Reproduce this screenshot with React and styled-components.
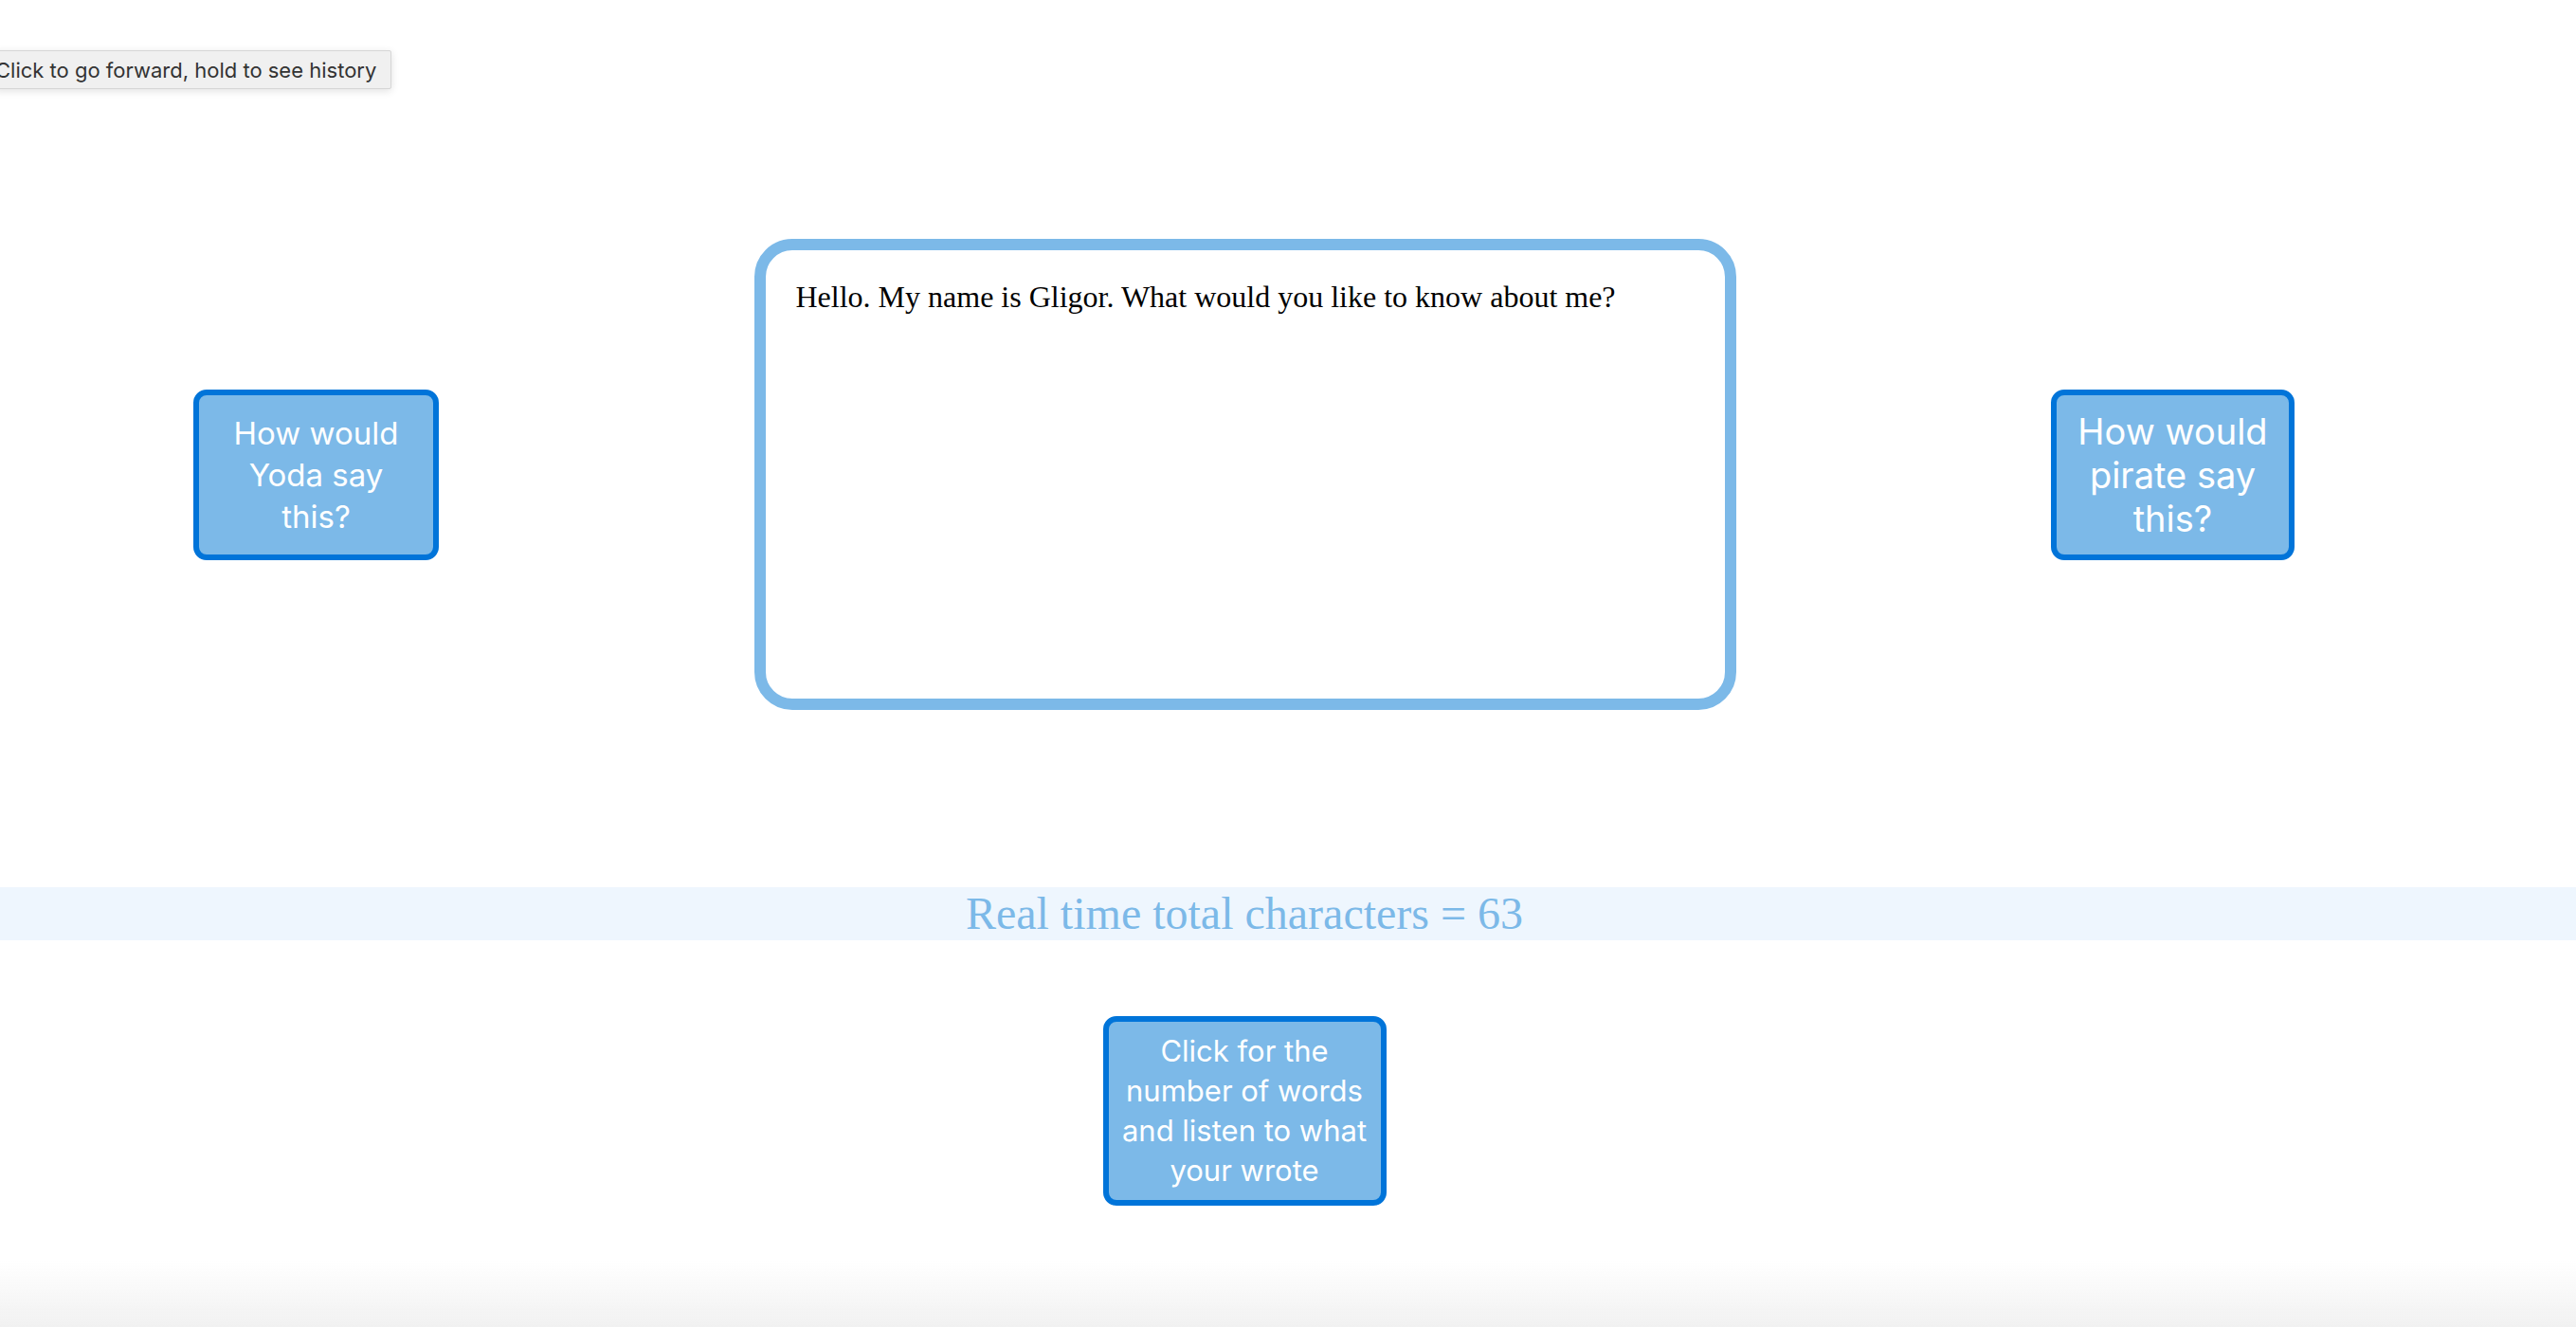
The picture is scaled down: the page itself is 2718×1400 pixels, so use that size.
import React from 'react';
import styled, { createGlobalStyle } from 'styled-components';

const message = 'Hello. My name is Gligor. What would you like to know about me?';

const App = () => {
  return (
    <>
      <GlobalStyle />
      <Page>
        <Tooltip>Click to go forward, hold to see history</Tooltip>

        <Row>
          <ActionButton $w={259} $h={180} $size={33} $lh={44}>
            How would
            <br />
            Yoda say
            <br />
            this?
          </ActionButton>

          <MessageBox defaultValue={message} spellCheck={false} />

          <ActionButton $w={257} $h={180} $size={38} $lh={46}>
            How would
            <br />
            pirate say
            <br />
            this?
          </ActionButton>
        </Row>

        <Counter>Real time total characters = {message.length}</Counter>

        <Bottom>
          <ActionButton $w={299} $h={200} $size={31} $lh={42}>
            Click for the
            <br />
            number of words
            <br />
            and listen to what
            <br />
            your wrote
          </ActionButton>
        </Bottom>
      </Page>
      <BottomFade />
    </>
  );
};

const GlobalStyle = createGlobalStyle`
  html, body {
    margin: 0;
    padding: 0;
    background: #ffffff;
  }
  body {
    font-family: "Liberation Serif", serif;
    overflow: hidden;
  }
`;

const Page = styled.main`
  position: relative;
  min-height: 1400px;
  padding: 252px 92px 0 0;
  box-sizing: border-box;
`;

const Tooltip = styled.div`
  position: absolute;
  top: 53px;
  left: -6px;
  height: 39px;
  padding: 0 15px 0 0;
  display: flex;
  align-items: center;
  background: #f0f0f0;
  border: 1px solid #d6d6d6;
  border-radius: 2px;
  box-shadow: 0 2px 8px rgba(0, 0, 0, 0.12);
  color: #333333;
  font-family: Inter, "Noto Sans", sans-serif;
  font-size: 22px;
  white-space: nowrap;
`;

const Row = styled.section`
  display: flex;
  align-items: center;
  justify-content: space-between;
  padding: 0 205px 0 204px;
`;

const MessageBox = styled.textarea`
  width: 1036px;
  height: 497px;
  box-sizing: border-box;
  padding: 31px 32px 32px;
  border: 12px solid #7cb9e8;
  border-radius: 40px;
  outline: none;
  resize: none;
  background: #ffffff;
  color: #000000;
  font-family: "Liberation Serif", serif;
  font-size: 32px;
  line-height: 1.15;
`;

const ActionButton = styled.button`
  width: ${({ $w }) => $w}px;
  height: ${({ $h }) => $h}px;
  box-sizing: border-box;
  flex-shrink: 0;
  padding: 0;
  display: flex;
  align-items: center;
  justify-content: center;
  background: #7cb9e8;
  border: 6px solid #0074d9;
  border-radius: 14px;
  color: #ffffff;
  font-family: Inter, "Noto Sans", sans-serif;
  font-size: ${({ $size }) => $size}px;
  line-height: ${({ $lh }) => $lh}px;
  text-align: center;
  white-space: nowrap;
  cursor: pointer;
`;

const Counter = styled.div`
  margin: 187px -92px 0 0;
  padding-right: 92px;
  height: 56px;
  background: #eef6fe;
  color: #7cb9e8;
  font-family: "Liberation Serif", serif;
  font-size: 48px;
  line-height: 56px;
  text-align: center;
`;

const Bottom = styled.div`
  display: flex;
  justify-content: center;
  margin-top: 80px;
`;

const BottomFade = styled.div`
  position: fixed;
  left: 0;
  right: 0;
  bottom: 0;
  height: 70px;
  background: linear-gradient(to bottom, rgba(242, 242, 242, 0), #f1f1f1);
  pointer-events: none;
`;

export default App;
